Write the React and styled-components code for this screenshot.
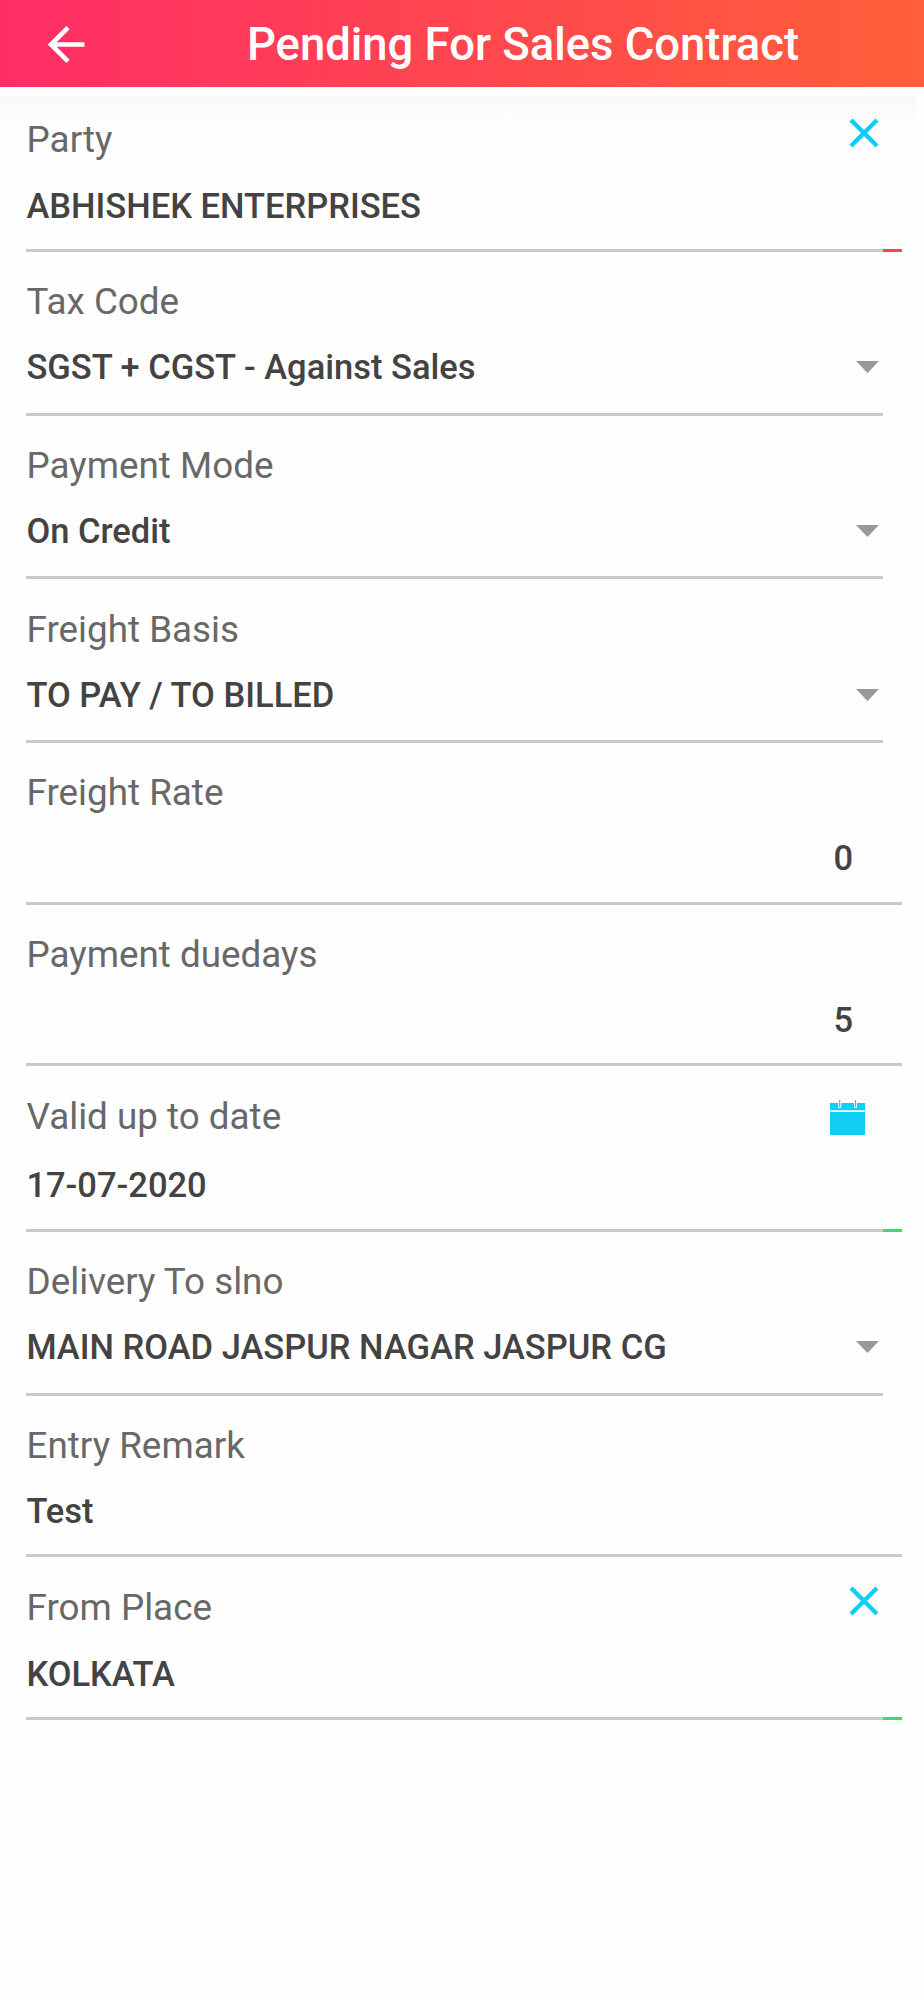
import React from "react";

import styled, { createGlobalStyle } from "styled-components";

const GlobalStyle = createGlobalStyle`
  * {
    box-sizing: border-box;
  }
  body {
    margin: 0;
    background: #fefefe;
    font-family: Roboto, "Liberation Sans", sans-serif;
  }
`;

const Page = styled.div`
  display: flex;
  flex-direction: column;
  min-height: 2000px;
`;

const Header = styled.header`
  display: flex;
  align-items: center;
  height: 87px;
  padding: 0 125px 0 48px;
  background: linear-gradient(90deg, #ff2d66 0%, #ff5f3a 100%);
`;

const BackButton = styled.button`
  display: flex;
  margin: 1px 0 0;
  padding: 0;
  border: none;
  background: none;
`;

const Title = styled.h1`
  margin: 2px 0 0 auto;
  color: #ffffff;
  font-size: 45.4px;
  font-weight: 500;
  line-height: 56px;
  white-space: nowrap;
`;

const Form = styled.main`
  margin-top: 9px;
  padding: 0 22px 0 26px;
  background: linear-gradient(#f8f8f8, #fefefe) no-repeat;
  background-size: 916px 30px;
`;

const heights = {
  lookup: "163px",
  select: "163.7px",
  text: "161.6px",
  date: "165.7px",
};

const valueGaps = {
  lookup: "24px",
  select: "23px",
  text: "23px",
  date: "26.5px",
};

const Field = styled.div`
  display: flex;
  flex-direction: column;
  height: ${(props) => heights[props.$type]};
  padding-top: 28.4px;

  &:first-child {
    height: 156px;
    padding-top: 21.9px;
  }
`;

const Row = styled.div`
  display: flex;
  justify-content: space-between;
  height: 44px;
  padding-left: 0.6px;
`;

const Label = styled.label`
  color: #686868;
  font-size: 36.8px;
  line-height: 44px;
  white-space: nowrap;
`;

const ValueRow = styled.div`
  display: flex;
  justify-content: ${(props) => (props.$right ? "flex-end" : "space-between")};
  height: 40px;
  margin-top: ${(props) => valueGaps[props.$type]};
  padding-left: 0.4px;
  padding-right: ${(props) => (props.$right ? "49px" : "23px")};
`;

const Value = styled.span`
  color: #434343;
  font-size: 34.5px;
  font-weight: 500;
  line-height: 40px;
  white-space: nowrap;
`;

const IconButton = styled.button`
  display: flex;
  align-self: flex-start;
  margin: ${(props) => props.$margin};
  padding: 0;
  border: none;
  background: none;
`;

const Arrow = styled.svg`
  margin-top: 13.8px;
`;

const Underline = styled.div`
  display: flex;
  height: 3px;
  margin-top: auto;
  margin-right: ${(props) => (props.$short ? "19px" : "0")};
  background: #cacaca;
`;

const Status = styled.div`
  width: 19px;
  margin-left: auto;
  background: ${(props) => props.$color};
`;

const fields = [
  { label: "Party", value: "ABHISHEK ENTERPRISES", type: "lookup", status: "#fb4649" },
  { label: "Tax Code", value: "SGST + CGST - Against Sales", type: "select" },
  { label: "Payment Mode", value: "On Credit", type: "select" },
  { label: "Freight Basis", value: "TO PAY / TO BILLED", type: "select" },
  { label: "Freight Rate", value: "0", type: "text", right: true },
  { label: "Payment duedays", value: "5", type: "text", right: true },
  { label: "Valid up to date", value: "17-07-2020", type: "date", status: "#3ddd6c" },
  { label: "Delivery To slno", value: "MAIN ROAD JASPUR NAGAR JASPUR CG", type: "select" },
  { label: "Entry Remark", value: "Test", type: "text" },
  { label: "From Place", value: "KOLKATA", type: "lookup", status: "#3ddd6c" },
];

function ClearIcon() {
  return (
    <svg width="30" height="30" viewBox="0 0 30 30" stroke="#12cdf6" strokeWidth="4.5">
      <path d="M2 2L28 28M28 2L2 28" />
    </svg>
  );
}

function CalendarIcon() {
  return (
    <svg width="35" height="35" viewBox="0 0 35 35" fill="#12cdf6">
      <path d="M0 3h35v7.3H0zM0 12h35v23H0z" />
      <path d="M8.2 0h3v8h-3zM24 0h3v8h-3z" fill="#ffffff" />
      <path d="M9.1 0h1.2v7.3H9.1zM24.9 0h1.2v7.3h-1.2z" />
    </svg>
  );
}

function FormField(props) {
  const { label, value, type, right, status } = props;
  return (
    <Field $type={type}>
      <Row>
        <Label>{label}</Label>
        {type === "lookup" && (
          <IconButton $margin="0 23px 0 0" aria-label="Clear">
            <ClearIcon />
          </IconButton>
        )}
        {type === "date" && (
          <IconButton $margin="5px 37px 0 0" aria-label="Pick date">
            <CalendarIcon />
          </IconButton>
        )}
      </Row>
      <ValueRow $right={right} $type={type}>
        <Value>{value}</Value>
        {type === "select" && (
          <Arrow width="23" height="12" viewBox="0 0 23 12" fill="#999999">
            <path d="M0 0h23L11.5 12z" />
          </Arrow>
        )}
      </ValueRow>
      <Underline $short={type === "select"}>
        {status && <Status $color={status} />}
      </Underline>
    </Field>
  );
}

function App() {
  return (
    <Page>
      <GlobalStyle />
      <Header>
        <BackButton aria-label="Back">
          <svg width="37" height="37" viewBox="0 0 37 37" fill="none" stroke="#ffffff" strokeWidth="4.6">
            <path d="M36.5 18.5H3M20 1.7L3 18.5L20 35.3" />
          </svg>
        </BackButton>
        <Title>Pending For Sales Contract</Title>
      </Header>
      <Form>
        {fields.map((field) => (
          <FormField key={field.label} {...field} />
        ))}
      </Form>
    </Page>
  );
}

export default App;
